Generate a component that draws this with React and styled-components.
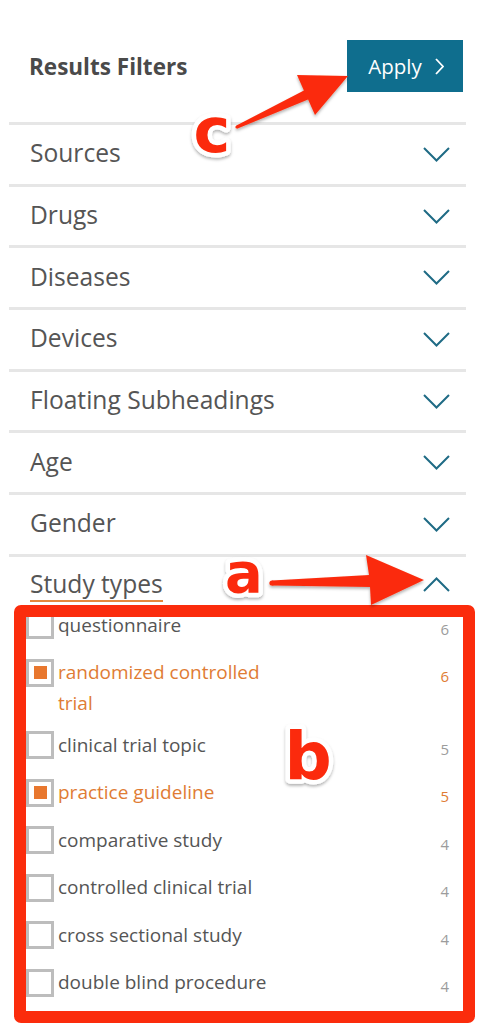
import React from "react";
import styled, { createGlobalStyle } from "styled-components";

const GlobalStyle = createGlobalStyle`
  html, body { margin: 0; padding: 0; background: #ffffff; }
  body { font-family: "Open Sans", "Noto Sans", sans-serif; }
  * { box-sizing: border-box; }
`;

const Page = styled.div`
  position: relative;
  width: 488px;
  height: 1024px;
  overflow: hidden;
  background: #fff;
`;

const Panel = styled.div`
  padding: 0 22px 0 9px;
`;

const Header = styled.div`
  display: flex;
  align-items: center;
  justify-content: space-between;
  padding: 40px 3px 30px 20px;
`;

const Title = styled.h2`
  margin: 0;
  font-size: 22.5px;
  font-weight: 700;
  color: #4a4a4a;
`;

const ApplyButton = styled.button`
  display: flex;
  align-items: center;
  justify-content: center;
  gap: 13px;
  width: 116px;
  height: 52px;
  border: 0;
  padding: 0 0 0 2px;
  background: #0f6e8e;
  color: #fff;
  font-family: "Open Sans", sans-serif;
  font-size: 20.5px;
  cursor: pointer;
`;

const FilterRow = styled.div`
  display: flex;
  align-items: center;
  justify-content: space-between;
  height: 61.7px;
  border-top: 3px solid #e6e6e6;
  padding: 0 16px 0 21px;
`;

const RowLabel = styled.span`
  font-size: 24.6px;
  color: #555;
  margin-top: -3px;
`;

const Section = styled.div`
  border-top: 3px solid #e6e6e6;
`;

const SectionHead = styled.div`
  display: flex;
  align-items: center;
  justify-content: space-between;
  padding: 11px 16px 0 21px;
`;

const ActiveLabel = styled.span`
  font-size: 24.6px;
  line-height: 32px;
  color: #555;
  border-bottom: 2px solid #e5873c;
`;

const List = styled.div`
  padding: 0 17px;
`;

const Item = styled.div`
  display: flex;
  align-items: flex-start;
  min-height: 47.5px;
  padding: 8px 0 2.5px;
`;

const Box = styled.span`
  flex: none;
  display: flex;
  align-items: center;
  justify-content: center;
  width: 28px;
  height: 28px;
  margin-top: 1.5px;
  border: 3px solid #bdbdbd;
`;

const Mark = styled.span`
  width: 13px;
  height: 13px;
  background: #e8772e;
`;

const ItemLabel = styled.span`
  width: 232px;
  margin-left: 4px;
  font-size: 19px;
  line-height: 31px;
  color: ${(p) => (p.$on ? "#e07c34" : "#555")};
`;

const Count = styled.span`
  margin-left: auto;
  padding-top: 4px;
  font-size: 15px;
  line-height: 31px;
  color: ${(p) => (p.$on ? "#e07c34" : "#9c9c9c")};
`;

const Overlay = styled.svg`
  position: absolute;
  left: 0;
  top: 0;
  width: 488px;
  height: 1024px;
  pointer-events: none;
`;

const RedFrame = styled.div`
  position: absolute;
  left: 14px;
  top: 605px;
  width: 461px;
  height: 418px;
  border: 12px solid #fb2c0c;
  border-radius: 7px;
  pointer-events: none;
`;

const Chevron = ({ up }) => (
  <svg width="27" height="15" viewBox="0 0 27 15">
    <polyline
      points={up ? "1,14 13.5,1.5 26,14" : "1,1 13.5,13.5 26,1"}
      fill="none"
      stroke="#1f6b85"
      strokeWidth="2"
    />
  </svg>
);

const filters = ["Sources", "Drugs", "Diseases", "Devices", "Floating Subheadings", "Age", "Gender"];

const studyTypes = [
  { name: "questionnaire", count: 6 },
  { name: "randomized controlled trial", count: 6, on: true },
  { name: "clinical trial topic", count: 5 },
  { name: "practice guideline", count: 5, on: true },
  { name: "comparative study", count: 4 },
  { name: "controlled clinical trial", count: 4 },
  { name: "cross sectional study", count: 4 },
  { name: "double blind procedure", count: 4 },
];

const letterStyle = {
  fontFamily: "'DejaVu Sans', sans-serif",
  fontWeight: 700,
  fill: "#fb2c0c",
  stroke: "#ffffff",
  strokeWidth: 9,
  strokeLinejoin: "round",
  paintOrder: "stroke fill",
};

export default function App() {
  return (
    <Page>
      <GlobalStyle />
      <Panel>
        <Header>
          <Title>Results Filters</Title>
          <ApplyButton>
            Apply
            <svg width="9" height="17" viewBox="0 0 9 17">
              <polyline points="1,1 8,8.5 1,16" fill="none" stroke="#fff" strokeWidth="1.8" />
            </svg>
          </ApplyButton>
        </Header>
        {filters.map((f) => (
          <FilterRow key={f}>
            <RowLabel>{f}</RowLabel>
            <Chevron />
          </FilterRow>
        ))}
        <Section>
          <SectionHead>
            <ActiveLabel>Study types</ActiveLabel>
            <Chevron up />
          </SectionHead>
          <List>
            {studyTypes.map((s) => (
              <Item key={s.name}>
                <Box>{s.on && <Mark />}</Box>
                <ItemLabel $on={s.on}>{s.name}</ItemLabel>
                <Count $on={s.on}>{s.count}</Count>
              </Item>
            ))}
          </List>
        </Section>
      </Panel>

      <RedFrame />
      <Overlay viewBox="0 0 488 1024">
        <defs>
          <filter id="sh" x="-20%" y="-20%" width="140%" height="140%">
            <feDropShadow dx="0" dy="2" stdDeviation="1.5" floodColor="#000" floodOpacity="0.3" />
          </filter>
        </defs>
        <g filter="url(#sh)" fill="#fb2c0c">
          <polygon points="236.4,125.6 303.9,90.5 297,75 348,76 315,115 308.1,99.6 237.6,128.4" />
          <circle cx="237" cy="127" r="1.6" />
          <polygon points="272,580.5 369,575 366,555 424,580 371,605 370,587 272,585.5" />
          <circle cx="272" cy="583" r="2.6" />
        </g>
        <g filter="url(#sh)">
          <text x="212" y="152" textAnchor="middle" fontSize="62" style={letterStyle}>c</text>
          <text x="244" y="592" textAnchor="middle" fontSize="56" style={letterStyle}>a</text>
          <text x="308" y="779" textAnchor="middle" fontSize="66" style={letterStyle}>b</text>
        </g>
      </Overlay>
    </Page>
  );
}
